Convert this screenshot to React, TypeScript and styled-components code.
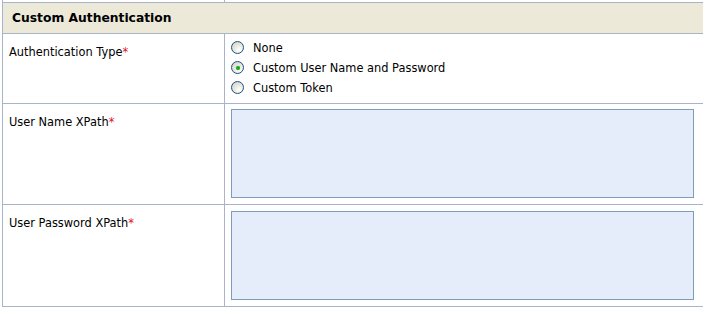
import React, { useState } from 'react';
import styled, { createGlobalStyle } from 'styled-components';

const GlobalStyle = createGlobalStyle`
  body {
    margin: 0;
    background: #ffffff;
    font-family: "DejaVu Sans", Verdana, sans-serif;
  }
`;

const StyledForm = styled.div`
  margin-left: 2px;
  border-left: 1px solid #a7b4c9;
  width: 701px;
  font-size: 11.4px;
  color: #000000;
`;

const StyledRow = styled.div<{ height?: number }>`
  display: grid;
  grid-template-columns: 222px 1fr;
  border-bottom: 1px solid #a7b4c9;
  min-height: ${(p) => (p.height !== undefined ? `${p.height}px` : 'auto')};
`;

const StyledLabel = styled.div`
  border-right: 1px solid #a7b4c9;
  padding: 12px 6px 0 6px;
  line-height: 13px;
  .required {
    color: #e0102a;
  }
`;

const StyledField = styled.div<{ top?: number }>`
  padding: ${(p) => p.top ?? 5}px 9px 6px 6px;
`;

const StyledHeader = styled.div`
  background: #ece9d8;
  border-bottom: 1px solid #a7b4c9;
  height: 30px;
  display: flex;
  align-items: center;
  padding-left: 9px;
  font-weight: bold;
  font-size: 12.3px;
  color: #000;
`;

const StyledRadioList = styled.div`
  display: flex;
  flex-direction: column;
  gap: 7px;
  padding-top: 2px;
`;

const StyledRadioOption = styled.label`
  display: flex;
  align-items: center;
  gap: 9px;
  height: 13px;
  cursor: pointer;
`;

const StyledRadioDot = styled.span<{ checked: boolean }>`
  width: 11px;
  height: 11px;
  border-radius: 50%;
  border: 1px solid #1c5180;
  background: radial-gradient(circle at 65% 70%, #ffffff 0%, #e9e9e0 45%, #c8c8bd 100%);
  display: flex;
  align-items: center;
  justify-content: center;
  &::after {
    content: '';
    width: 4px;
    height: 4px;
    border-radius: 50%;
    background: #22a322;
    box-shadow: 0 0 1px #5dd25d;
    display: ${(p) => (p.checked ? 'block' : 'none')};
  }
`;

const StyledTextArea = styled.textarea`
  display: block;
  box-sizing: border-box;
  width: 463px;
  height: 89px;
  border: 1px solid #7f9db9;
  background: #e6edfa;
  resize: none;
  outline: none;
  font-family: inherit;
  font-size: 11px;
  margin: 0;
`;

const authTypes = ['None', 'Custom User Name and Password', 'Custom Token'];

export default function App() {
  const [authType, setAuthType] = useState(authTypes[1]);

  return (
    <>
      <GlobalStyle />
      <StyledForm>
        <StyledRow height={2}>
          <StyledLabel style={{ padding: 0 }} />
          <div />
        </StyledRow>
        <StyledHeader>Custom Authentication</StyledHeader>
        <StyledRow height={69}>
          <StyledLabel>
            Authentication Type<span className="required">*</span>
          </StyledLabel>
          <StyledField>
            <StyledRadioList>
              {authTypes.map((t) => (
                <StyledRadioOption key={t} onClick={() => setAuthType(t)}>
                  <StyledRadioDot checked={authType === t} />
                  {t}
                </StyledRadioOption>
              ))}
            </StyledRadioList>
          </StyledField>
        </StyledRow>
        <StyledRow>
          <StyledLabel>
            User Name XPath<span className="required">*</span>
          </StyledLabel>
          <StyledField top={5}>
            <StyledTextArea />
          </StyledField>
        </StyledRow>
        <StyledRow>
          <StyledLabel>
            User Password XPath<span className="required">*</span>
          </StyledLabel>
          <StyledField top={6}>
            <StyledTextArea />
          </StyledField>
        </StyledRow>
      </StyledForm>
    </>
  );
}
